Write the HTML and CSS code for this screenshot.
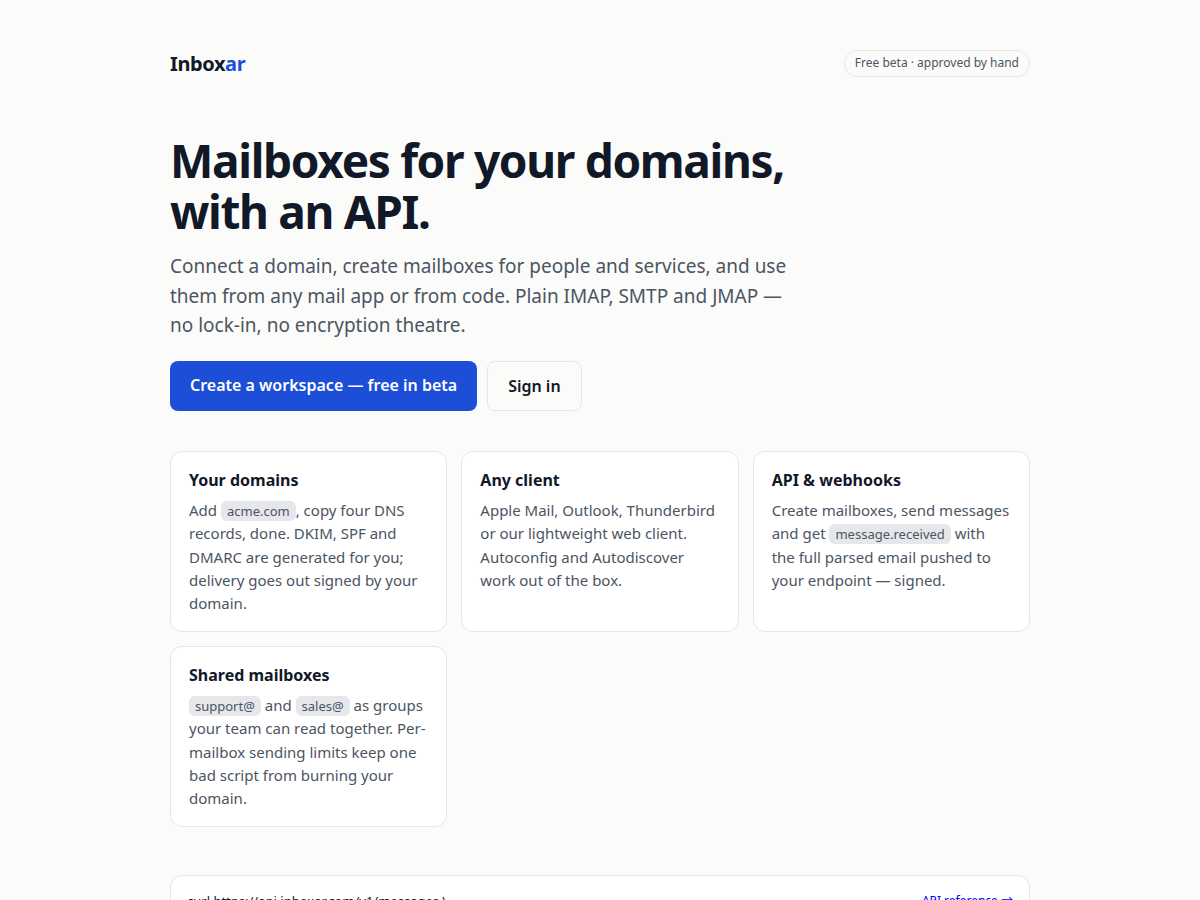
FILE: index.html
```html
<!DOCTYPE html>
<html lang="en">
<head>
    <meta charset="UTF-8">
    <meta name="viewport" content="width=device-width, initial-scale=1.0">
    <title>Inboxar</title>
    <link rel="stylesheet" href="styles.css">
</head>
<body>
    <div class="wrap">
        <header>
            <div class="logo">Inbox<span>ar</span></div>
            <div class="badge">Free beta · approved by hand</div>
        </header>

        <main>
            <h1>Mailboxes for your domains, with an API.</h1>
            <p class="lead">Connect a domain, create mailboxes for people and services, and use them from any mail app or from code. Plain IMAP, SMTP and JMAP — no lock-in, no encryption theatre.</p>

            <div class="cta">
                <a class="btn primary" href="#">Create a workspace — free in beta</a>
                <a class="btn" href="#">Sign in</a>
            </div>

            <div class="grid">
                <div class="card">
                    <h3>Your domains</h3>
                    <p>Add <code>acme.com</code>, copy four DNS records, done. DKIM, SPF and DMARC are generated for you; delivery goes out signed by your domain.</p>
                </div>
                <div class="card">
                    <h3>Any client</h3>
                    <p>Apple Mail, Outlook, Thunderbird or our lightweight web client. Autoconfig and Autodiscover work out of the box.</p>
                </div>
                <div class="card">
                    <h3>API &amp; webhooks</h3>
                    <p>Create mailboxes, send messages and get <code>message.received</code> with the full parsed email pushed to your endpoint — signed.</p>
                </div>
                <div class="card">
                    <h3>Shared mailboxes</h3>
                    <p><code>support@</code> and <code>sales@</code> as groups your team can read together. Per-mailbox sending limits keep one bad script from burning your domain.</p>
                </div>
            </div>

            <div class="api">
                <pre>curl https://api.inboxar.com/v1/messages \</pre>
                <a href="#">API reference →</a>
            </div>
        </main>
    </div>
</body>
</html>
```

FILE: styles.css
```css
* {
    box-sizing: border-box;
}

body {
    margin: 0;
    background: #fbfbf9;
    color: #111827;
    font: 16px/1.55 "Noto Sans", "Noto Sans CJK JP", sans-serif;
}

.wrap {
    max-width: 900px;
    margin: 0 auto;
    padding: 48px 20px;
}

header {
    display: flex;
    justify-content: space-between;
    align-items: center;
    margin-bottom: 56px;
}

.logo {
    font-size: 20px;
    font-weight: 700;
    letter-spacing: -0.02em;
}

.logo span {
    color: #1d4ed8;
}

.badge {
    font-size: 12px;
    color: #4b5563;
    border: 1px solid #e5e7eb;
    border-radius: 999px;
    padding: 3px 10px;
}

h1 {
    font-size: 46px;
    line-height: 1.1;
    letter-spacing: -0.029em;
    margin: 0 0 16px;
    max-width: 640px;
}

.lead {
    font-size: 19px;
    color: #4b5563;
    max-width: 620px;
    margin: 0 0 20px;
}

.cta {
    display: flex;
    flex-wrap: wrap;
    gap: 10px;
    margin-bottom: 40px;
}

.btn {
    padding: 12px 20px;
    border: 1px solid #e5e7eb;
    border-radius: 8px;
    color: #111827;
    font-weight: 600;
    text-decoration: none;
}

.btn.primary {
    background: #1d4ed8;
    border: none;
    color: #fff;
}

.grid {
    display: grid;
    grid-template-columns: repeat(auto-fit, minmax(240px, 1fr));
    gap: 14px;
    margin-bottom: 48px;
}

.card {
    background: #fff;
    border: 1px solid #e5e7eb;
    border-radius: 12px;
    padding: 16px 18px;
}

.card h3 {
    font-size: 16px;
    margin: 0 0 6px;
}

.card p {
    font-size: 15px;
    color: #4b5563;
    margin: 0;
}

code {
    font-family: "Noto Sans", sans-serif;
    font-size: 13px;
    background: #e5e7eb;
    border-radius: 6px;
    padding: 1px 6px;
}

.api {
    display: flex;
    justify-content: space-between;
    align-items: flex-start;
    background: #fff;
    border: 1px solid #e5e7eb;
    border-radius: 12px;
    padding: 15px 16px;
    line-height: 20px;
}

.api pre {
    font-family: "Noto Sans", sans-serif;
    font-size: 13px;
    margin: 0;
}

.api a {
    font-size: 12px;
}
```
